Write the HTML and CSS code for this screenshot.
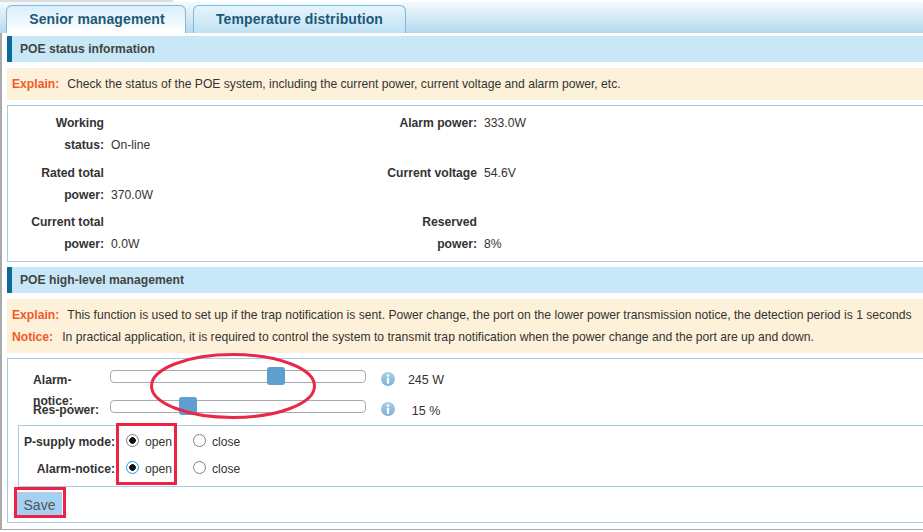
FILE: index.html
```html
<!DOCTYPE html>
<html lang="en">
<head>
  <meta charset="UTF-8" />
  <title>POE management</title>
  <link rel="stylesheet" href="styles.css">
</head>
<body>
  <svg class="svg-defs" width="0" height="0">
    <defs>
      <linearGradient id="infoFill" x1="0" y1="0" x2="0" y2="1">
        <stop offset="0" stop-color="#a9cfea"/>
        <stop offset="1" stop-color="#7fb0d8"/>
      </linearGradient>
    </defs>
  </svg>
  <div class="top-sliver"></div>
  <div class="tabs">
    <a class="tab active">Senior management</a>
    <a class="tab tab-temp">Temperature distribution</a>
  </div>

  <div class="content">
    <div class="section-title">POE status information</div>
    <div class="explain">
      <p><b>Explain:</b>Check the status of the POE system, including the current power, current voltage and alarm power, etc.</p>
    </div>
    <div class="panel status-grid">
      <div class="pair"><span class="key">Working status:</span><span>On-line</span></div>
      <div class="pair"><span class="key key-r">Alarm power:</span><span>333.0W</span></div>
      <div class="pair"><span class="key">Rated total power:</span><span>370.0W</span></div>
      <div class="pair"><span class="key key-r">Current voltage</span><span>54.6V</span></div>
      <div class="pair"><span class="key">Current total power:</span><span>0.0W</span></div>
      <div class="pair"><span class="key key-r">Reserved power:</span><span>8%</span></div>
    </div>

    <div class="section-title second">POE high-level management</div>
    <div class="explain">
      <p><b>Explain:</b>This function is used to set up if the trap notification is sent. Power change, the port on the lower power transmission notice, the detection period is 1 seconds</p>
      <p><b class="notice">Notice:</b>In practical application, it is required to control the system to transmit trap notification when the power change and the port are up and down.</p>
    </div>
    <div class="panel manage">
      <div class="slider-row">
        <span class="slider-label">Alarm-notice:</span>
        <div class="track"><span class="handle" style="left: 61.6%"></span></div>
        <svg class="info" viewBox="0 0 14 14">
          <circle cx="7" cy="7" r="7" fill="url(#infoFill)"/>
          <circle cx="7" cy="3.6" r="1.3" fill="#fff"/>
          <rect x="5.9" y="5.8" width="2.2" height="6" fill="#fff"/>
        </svg>
        <span class="slider-value">245 W</span>
      </div>
      <div class="slider-row">
        <span class="slider-label">Res-power:</span>
        <div class="track"><span class="handle" style="left: 26.7%"></span></div>
        <svg class="info" viewBox="0 0 14 14">
          <circle cx="7" cy="7" r="7" fill="url(#infoFill)"/>
          <circle cx="7" cy="3.6" r="1.3" fill="#fff"/>
          <rect x="5.9" y="5.8" width="2.2" height="6" fill="#fff"/>
        </svg>
        <span class="slider-value">15 %</span>
      </div>

      <div class="radio-box">
        <div class="radio-row">
          <span class="radio-label">P-supply mode:</span>
          <label class="radio"><input type="radio" name="supply" checked>open</label>
          <label class="radio"><input type="radio" name="supply">close</label>
        </div>
        <div class="radio-row">
          <span class="radio-label">Alarm-notice:</span>
          <label class="radio"><input type="radio" name="alarm" class="focused" checked>open</label>
          <label class="radio"><input type="radio" name="alarm">close</label>
        </div>
      </div>
      <button type="button" class="save-btn">Save</button>
    </div>
  </div>

  <!-- red markup drawn on top of the screenshot -->
  <svg class="mark-ellipse" viewBox="0 0 170 70">
    <ellipse cx="85" cy="35" rx="81.5" ry="31.5" fill="none" stroke="#e8294a" stroke-width="3"/>
  </svg>
  <div class="mark-box mark-radios"></div>
  <div class="mark-box mark-save"></div>
</body>
</html>
```

FILE: styles.css
```css
html, body {
  height: 100%;
}
body {
  margin: 0;
  position: relative;
  width: 923px;
  height: 532px;
  overflow: hidden;
  background: #fff;
  font-family: "Liberation Sans", Arial, sans-serif;
  font-size: 12.15px;
  color: #333;
}
.svg-defs {
  display: block;
  height: 0;
}
.top-sliver {
  width: 173px;
  height: 2px;
  background: #ddd;
}
.tabs {
  display: flex;
  gap: 7px;
  height: 31px;
  box-sizing: border-box;
  padding: 3px 0 0 6px;
  background: linear-gradient(#f4fafd, #b4d9ee);
}
.tab {
  width: 180px;
  box-sizing: border-box;
  padding-left: 2px;
  border: 1px solid #82b8d8;
  border-bottom: none;
  border-radius: 6px 6px 0 0;
  background: linear-gradient(#d8eefa, #ffffff);
  text-align: center;
  line-height: 26px;
  font-size: 14px;
  font-weight: bold;
  letter-spacing: 0.1px;
  color: #1d5878;
}
.tab-temp {
  width: 213px;
  padding-left: 0;
  background: linear-gradient(#e6f5fc, #bfe1f4);
}
.content {
  width: 940px;
  height: 497px;
  box-sizing: border-box;
  border-left: 2px solid #aaa;
  border-bottom: 1px solid #aaa;
  padding: 3px 0 0 5px;
}
.section-title {
  height: 26px;
  line-height: 27px;
  padding-left: 8px;
  border-left: 5px solid #0d6a9c;
  background: #c8e8f7;
  font-weight: bold;
  color: #444;
}
.section-title.second {
  margin-top: 5px;
}
.explain {
  margin-top: 6px;
  padding: 5px 5px;
  background: #fef1d9;
}
.explain p {
  margin: 0;
  line-height: 22px;
}
.explain b {
  color: #f05a28;
  margin-right: 8px;
}
.explain b.notice {
  margin-right: 9px;
}
.panel {
  margin-top: 5px;
  border: 1px solid #a9cbe0;
  box-sizing: border-box;
}
.status-grid {
  height: 157px;
  padding: 6px 0 0 20px;
  display: grid;
  grid-template-columns: 356px 1fr;
  grid-auto-rows: 44px;
  row-gap: 5.5px;
}
.pair {
  display: flex;
  align-items: last baseline;
  align-self: start;
  line-height: 22px;
  gap: 7px;
}
.key {
  width: 76px;
  flex: none;
  text-align: right;
  font-weight: bold;
}
.key-r {
  width: 93px;
}
.manage {
  height: 165px;
  padding-top: 7px;
}
.slider-row {
  display: flex;
  align-items: flex-start;
  height: 30px;
  padding-left: 25px;
}
.slider-label {
  width: 70px;
  margin-right: 7px;
  padding-top: 4px;
  line-height: 21px;
  font-weight: bold;
}
.slider-row + .slider-row .slider-label {
  padding-top: 3px;
  line-height: 22px;
}
.track {
  position: relative;
  width: 256px;
  height: 13px;
  margin-top: 4px;
  box-sizing: border-box;
  border: 1px solid #aaa;
  border-radius: 4px;
  background: #fff;
}
.handle {
  position: absolute;
  top: -4px;
  width: 18px;
  height: 18px;
  border-radius: 3px;
  background: #5f9fcf;
}
.info {
  width: 14px;
  height: 14px;
  margin: 6px 0 0 15px;
}
.slider-value {
  width: 40px;
  margin: 6px 0 0 11px;
  line-height: 16px;
  text-align: center;
  font-size: 12.5px;
}
.slider-row + .slider-row .slider-value {
  margin-top: 7px;
}
.radio-box {
  margin: -1px 0 0 10px;
  height: 62px;
  box-sizing: border-box;
  border: 1px solid #a9cbe0;
  border-right: none;
  padding-top: 2px;
}
.radio-row {
  display: flex;
  align-items: center;
  height: 27px;
}
.radio-label {
  width: 96px;
  flex: none;
  text-align: right;
  font-weight: bold;
}
.radio {
  display: flex;
  align-items: center;
  width: 67px;
  gap: 6px;
}
.radio:first-of-type {
  margin-left: 11px;
}
.radio input {
  appearance: none;
  margin: 0 0 3px;
  width: 13px;
  height: 13px;
  border: 1px solid #808080;
  border-radius: 50%;
  background: #fff;
}
.radio input:checked {
  background: radial-gradient(circle, #111 0 3px, #fff 3.6px);
}
.radio input.focused {
  border-color: #1a9fd8;
}
.save-btn {
  display: block;
  margin: 5px 0 0 8px;
  width: 46px;
  height: 24px;
  padding: 0;
  border: none;
  border-top: 1px solid #c8c8c8;
  border-left: 1px solid #c8c8c8;
  background: #a4d0f2;
  font-family: inherit;
  font-size: 14px;
  color: #555;
}
.mark-ellipse {
  position: absolute;
  left: 148px;
  top: 351px;
  width: 170px;
  height: 70px;
}
.mark-box {
  position: absolute;
  box-sizing: border-box;
  border: 3px solid #ee2244;
}
.mark-radios {
  left: 116px;
  top: 423px;
  width: 61px;
  height: 62px;
}
.mark-save {
  left: 14px;
  top: 487px;
  width: 52px;
  height: 31px;
}
```
